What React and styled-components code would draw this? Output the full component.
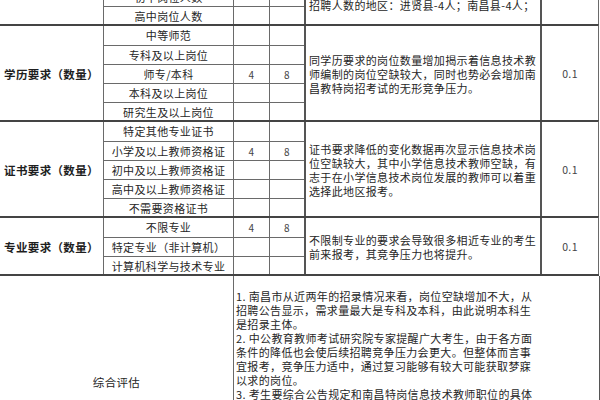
import React from 'react';
import styled, { createGlobalStyle } from 'styled-components';

const GlobalStyle = createGlobalStyle`
    html, body {
        margin: 0;
        padding: 0;
        background: #fff;
    }
    body {
        font-family: "Noto Sans CJK SC", "Noto Sans", sans-serif;
        color: #262626;
    }
`;

const COLS = '103px 130px 36px 35px 236px 58px';
const LINE = '#6a6a6a';

const sections = [
    {
        label: '招聘人数（数量）',
        items: ['不限', '小学岗位人数', '初中岗位人数', '高中岗位人数'],
        mark: -1,
        note: [
            '南昌特岗信息技术教师岗位需求人数较多，其中',
            '招聘人数的地区：进贤县-4人；南昌县-4人；',
        ],
        noteAlign: 'end',
        score: '0.1',
    },
    {
        label: '学历要求（数量）',
        items: ['中等师范', '专科及以上岗位', '师专/本科', '本科及以上岗位', '研究生及以上岗位'],
        mark: 2,
        note: [
            '同学历要求的岗位数量增加揭示着信息技术教',
            '师编制的岗位空缺较大，同时也势必会增加南',
            '昌教特岗招考试的无形竞争压力。',
        ],
        score: '0.1',
    },
    {
        label: '证书要求（数量）',
        items: ['特定其他专业证书', '小学及以上教师资格证', '初中及以上教师资格证', '高中及以上教师资格证', '不需要资格证书'],
        mark: 1,
        note: [
            '证书要求降低的变化数据再次显示信息技术岗',
            '位空缺较大，其中小学信息技术教师空缺，有',
            '志于在小学信息技术岗位发展的教师可以着重',
            '选择此地区报考。',
        ],
        score: '0.1',
    },
    {
        label: '专业要求（数量）',
        items: ['不限专业', '特定专业（非计算机）', '计算机科学与技术专业'],
        mark: 0,
        note: [
            '不限制专业的要求会导致很多相近专业的考生',
            '前来报考，其竞争压力也将提升。',
        ],
        score: '0.1',
    },
];

const summary = [
    '1. 南昌市从近两年的招录情况来看，岗位空缺增加不大，从',
    '招聘公告显示，需求量最大是专科及本科，由此说明本科生',
    '是招录主体。',
    '2. 中公教育教师考试研究院专家提醒广大考生，由于各方面',
    '条件的降低也会使后续招聘竞争压力会更大。但整体而言事',
    '宜报考，竞争压力适中，通过复习能够有较大可能获取梦寐',
    '以求的岗位。',
    '3. 考生要综合公告规定和南昌特岗信息技术教师职位的具体',
    '要求，结合自身条件，理性选择报考岗位，做好备考规划，',
    '争取在考试中取得理想的成绩。',
];

export default function App() {
    return (
        <>
            <GlobalStyle />
            <Viewport>
                <Sheet>
                    {sections.map((s, si) => {
                        const n = s.items.length;
                        return (
                            <Section key={si} $rows={n} $first={si === 0}>
                                <Label style={{ gridRow: `1 / span ${n}` }}>{s.label}</Label>
                                {s.items.map((item, i) => (
                                    <React.Fragment key={item}>
                                        <Item $col={2} $top={i > 0} style={{ gridRow: i + 1 }}>{item}</Item>
                                        <Num $col={3} $top={i > 0} style={{ gridRow: i + 1 }}>{i === s.mark ? '4' : ''}</Num>
                                        <Num $col={4} $top={i > 0} style={{ gridRow: i + 1 }}>{i === s.mark ? '8' : ''}</Num>
                                    </React.Fragment>
                                ))}
                                <Note $align={s.noteAlign} style={{ gridRow: `1 / span ${n}` }}>
                                    {s.note.map(line => <NoteLine key={line}>{line}</NoteLine>)}
                                </Note>
                                <Score style={{ gridRow: `1 / span ${n}` }}>{s.score}</Score>
                            </Section>
                        );
                    })}
                    <SummarySection>
                        <SummaryLabel>综合评估</SummaryLabel>
                        <SummaryNote>
                            {summary.map(line => <NoteLine key={line}>{line}</NoteLine>)}
                        </SummaryNote>
                        <Score>0.1</Score>
                    </SummarySection>
                </Sheet>
            </Viewport>
        </>
    );
}

const Viewport = styled.div`
    width: 600px;
    height: 400px;
    overflow: hidden;
`;

const Sheet = styled.div`
    width: 599px;
    margin-top: -51px;
    display: flex;
    flex-direction: column;
`;

const Section = styled.div`
    display: grid;
    grid-template-columns: ${COLS};
    grid-template-rows: repeat(${p => p.$rows}, 19px);
    border-top: ${p => (p.$first ? 'none' : '2px solid #444')};
    margin-top: ${p => (p.$first ? '0' : '-1px')};
    border-right: 1.5px solid ${LINE};
`;

const Cell = styled.div`
    box-sizing: border-box;
    display: flex;
    align-items: center;
    justify-content: center;
    font-size: 11px;
    letter-spacing: 0.35px;
    white-space: nowrap;
    overflow: hidden;
    border-left: 1.5px solid ${LINE};
`;

const Label = styled(Cell)`
    grid-column: 1;
    border-left: none;
    font-size: 11.5px;
    font-weight: 700;
    color: #1e1e1e;
`;

const Item = styled(Cell)`
    grid-column: ${p => p.$col};
    border-top: ${p => (p.$top ? `1px solid ${LINE}` : 'none')};
    line-height: 19px;
`;

const Num = styled(Item)`
    font-size: 10px;
    color: #444;
`;

const Note = styled(Cell)`
    grid-column: 5;
    flex-direction: column;
    align-items: flex-start;
    justify-content: ${p => (p.$align === 'end' ? 'flex-end' : 'center')};
    padding: ${p => (p.$align === 'end' ? '0 0 13px 3px' : '0 0 0 3px')};
    border-left: 2px solid #555;
`;

const NoteLine = styled.span`
    display: block;
    line-height: 14px;
    white-space: nowrap;
`;

const Score = styled(Cell)`
    grid-column: 6;
    font-size: 10.5px;
    color: #444;
    border-left: 2px solid #555;
`;

const SummarySection = styled.div`
    display: grid;
    grid-template-columns: 233px 306px 60px;
    grid-template-rows: 212px;
    border-top: 2px solid #444;
    margin-top: -1px;
`;

const SummaryLabel = styled(Cell)`
    border-left: none;
    font-size: 11.5px;
`;

const SummaryNote = styled(Cell)`
    flex-direction: column;
    align-items: flex-start;
    justify-content: flex-start;
    padding: 13px 0 0 2px;
`;
